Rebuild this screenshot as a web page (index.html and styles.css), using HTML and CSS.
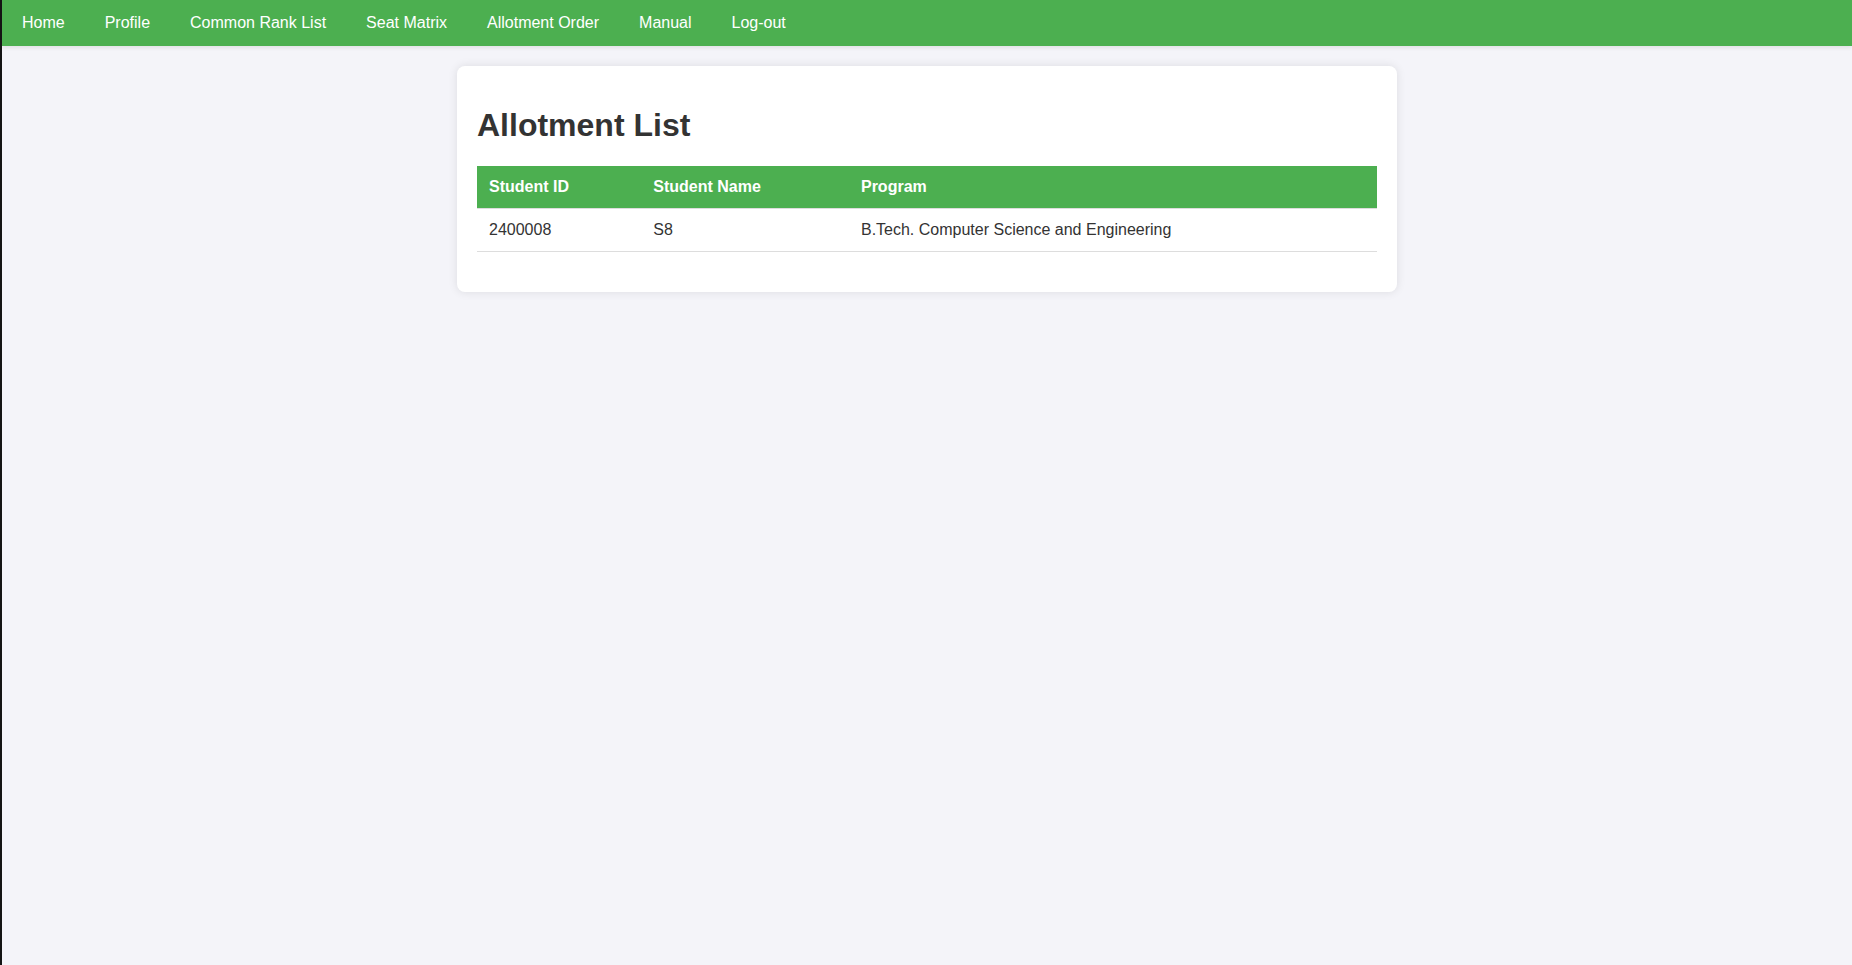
FILE: index.html
```html
<!DOCTYPE html>
<html lang="en">
<head>
<meta charset="utf-8">
<title>Allotment List</title>
<link rel="stylesheet" href="styles.css">
</head>
<body>
<nav class="topnav">
  <a href="#">Home</a>
  <a href="#">Profile</a>
  <a href="#">Common Rank List</a>
  <a href="#">Seat Matrix</a>
  <a href="#">Allotment Order</a>
  <a href="#">Manual</a>
  <a href="#">Log-out</a>
</nav>
<main class="container">
  <h1 class="title">Allotment List</h1>
  <table class="list">
    <thead>
      <tr><th>Student ID</th><th>Student Name</th><th>Program</th></tr>
    </thead>
    <tbody>
      <tr><td>2400008</td><td>S8</td><td>B.Tech. Computer Science and Engineering</td></tr>
    </tbody>
  </table>
</main>
</body>
</html>
```
FILE: styles.css
```css
html {
  background: #f4f4f9;
}
body {
  margin: 0;
  min-height: 100vh;
  border-left: 2px solid #141414;
  background: #f4f4f9;
  font-family: "Liberation Sans", Arial, sans-serif;
  font-size: 16px;
  color: #333;
}
.topnav {
  display: flex;
  background: #4caf50;
  box-shadow: 0 2px 4px rgba(0, 0, 0, 0.08);
}
.topnav a {
  display: block;
  padding: 14px 20px;
  color: #fff;
  text-decoration: none;
}
.container {
  max-width: 900px;
  margin: 20px auto;
  padding: 20px;
  background: #fff;
  border-radius: 8px;
  box-shadow: 0 0 10px rgba(0, 0, 0, 0.1);
}
.title {
  font-size: 32px;
  margin: 21.44px 0;
  color: #333;
}
.list {
  width: 100%;
  border-collapse: collapse;
  margin: 20px 0;
}
.list th,
.list td {
  padding: 12px;
  text-align: left;
  border-bottom: 1px solid #ddd;
}
.list th {
  background: #4caf50;
  color: #fff;
  font-weight: bold;
}
```
